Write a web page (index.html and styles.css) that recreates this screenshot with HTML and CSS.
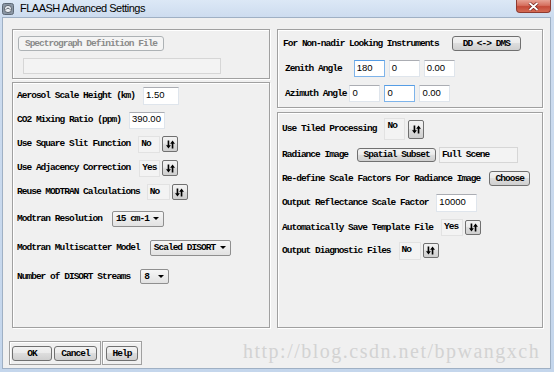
FILE: index.html
```html
<!DOCTYPE html>
<html>
<head>
<meta charset="utf-8">
<title>FLAASH Advanced Settings</title>
<link rel="stylesheet" href="styles.css">
</head>
<body>
<div class="window">
  <div class="titlebar">
    <svg class="app-icon" width="12" height="12" viewBox="0 0 12 12">
      <rect x="0.5" y="0.5" width="11" height="11" rx="2" fill="#8a96a4" stroke="#5d6875"/>
      <circle cx="6" cy="6" r="3.6" fill="#e9edf2" stroke="#4a525c" stroke-width="0.8"/>
      <path d="M3.6 6.8 Q6 3.5 8.4 6.8" fill="none" stroke="#4a525c" stroke-width="0.9"/>
    </svg>
    <span class="title">FLAASH Advanced Settings</span>
    <div class="close">
      <svg width="11" height="9" viewBox="0 0 11 9"><path d="M1.5 1 L9.5 8 M9.5 1 L1.5 8" stroke="#6b1c14" stroke-width="3.2"/><path d="M1.5 1 L9.5 8 M9.5 1 L1.5 8" stroke="#fff" stroke-width="1.8"/></svg>
    </div>
  </div>
  <div class="client">
    <div class="columns">
      <div class="col col-left">
        <div class="panel panel-spectro">
          <div class="btn btn-disabled spectro-btn">Spectrograph Definition File</div>
          <div class="field field-disabled spectro-field"></div>
        </div>
        <div class="panel panel-aero">
          <div class="row h24"><span class="lbl">Aerosol Scale Height (km)</span><div class="field w36 h18 ml8">1.50</div></div>
          <div class="row h24"><span class="lbl">CO2 Mixing Ratio (ppm)</span><div class="field w36 h17 ml8">390.00</div></div>
          <div class="row h24"><span class="lbl">Use Square Slit Function</span><div class="toggle w22 h17 ml8">No</div><div class="arrows w16 h16 ml2"><svg width="9" height="9" viewBox="0 0 11 10"><path d="M2 0h2v6h2l-3 4-3-4h2z M7 10h2V4h2L8 0 5 4h2z" fill="#000"/></svg></div></div>
          <div class="row h24"><span class="lbl">Use Adjacency Correction</span><div class="toggle w21 h17 ml9">Yes</div><div class="arrows w16 h16 ml2"><svg width="9" height="9" viewBox="0 0 11 10"><path d="M2 0h2v6h2l-3 4-3-4h2z M7 10h2V4h2L8 0 5 4h2z" fill="#000"/></svg></div></div>
          <div class="row h24"><span class="lbl">Reuse MODTRAN Calculations</span><div class="toggle w23 h16 ml7">No</div><div class="arrows w16 h16 ml2"><svg width="9" height="9" viewBox="0 0 11 10"><path d="M2 0h2v6h2l-3 4-3-4h2z M7 10h2V4h2L8 0 5 4h2z" fill="#000"/></svg></div></div>
          <div class="row h29"><span class="lbl">Modtran Resolution</span><div class="combo w52 h16 ml10"><span>15 cm-1</span><svg width="6" height="3" viewBox="0 0 6 3"><path d="M0 0h6L3 3z" fill="#000"/></svg></div></div>
          <div class="row h29"><span class="lbl">Modtran Multiscatter Model</span><div class="combo w81 h16 ml10"><span>Scaled DISORT</span><svg width="6" height="3" viewBox="0 0 6 3"><path d="M0 0h6L3 3z" fill="#000"/></svg></div></div>
          <div class="row h29"><span class="lbl">Number of DISORT Streams</span><div class="combo w29 h15 ml10"><span>8</span><svg width="6" height="3" viewBox="0 0 6 3"><path d="M0 0h6L3 3z" fill="#000"/></svg></div></div>
        </div>
      </div>
      <div class="col col-right">
        <div class="panel panel-angles">
          <div class="row h17"><span class="lbl">For Non-nadir Looking Instruments</span><div class="btn w69 h15 ml13">DD &lt;-&gt; DMS</div></div>
          <div class="row h17 indent2"><span class="lbl">Zenith Angle</span><div class="field w31 h17 ml12 focus">180</div><div class="field w31 h17 ml4">0</div><div class="field w31 h17 ml4">0.00</div></div>
          <div class="row h17 indent2"><span class="lbl">Azimuth Angle</span><div class="field w31 h17 ml3">0</div><div class="field w31 h17 ml4 focus">0</div><div class="field w31 h17 ml4">0.00</div></div>
        </div>
        <div class="panel panel-proc">
          <div class="row h26"><span class="lbl">Use Tiled Processing</span><div class="toggle w21 h22 ml8">No</div><div class="arrows w16 h19 ml3"><svg width="9" height="9" viewBox="0 0 11 10"><path d="M2 0h2v6h2l-3 4-3-4h2z M7 10h2V4h2L8 0 5 4h2z" fill="#000"/></svg></div></div>
          <div class="row h26"><span class="lbl">Radiance Image</span><div class="btn w79 h14 ml9">Spatial Subset</div><div class="field field-disabled w79 h16 ml3 topleft">Full Scene</div></div>
          <div class="row h21"><span class="lbl">Re-define Scale Factors For Radiance Image</span><div class="btn w41 h15 ml9">Choose</div></div>
          <div class="row h27"><span class="lbl">Output Reflectance Scale Factor</span><div class="field w41 h18 ml8">10000</div></div>
          <div class="row h23"><span class="lbl">Automatically Save Template File</span><div class="toggle w22 h17 ml8">Yes</div><div class="arrows w16 h15 ml2"><svg width="9" height="9" viewBox="0 0 11 10"><path d="M2 0h2v6h2l-3 4-3-4h2z M7 10h2V4h2L8 0 5 4h2z" fill="#000"/></svg></div></div>
          <div class="row h23"><span class="lbl">Output Diagnostic Files</span><div class="toggle w22 h18 ml8">No</div><div class="arrows w16 h15 ml2"><svg width="9" height="9" viewBox="0 0 11 10"><path d="M2 0h2v6h2l-3 4-3-4h2z M7 10h2V4h2L8 0 5 4h2z" fill="#000"/></svg></div></div>
        </div>
      </div>
    </div>
    <div class="bottom">
      <div class="group group-main">
        <div class="btn w40 h15">OK</div>
        <div class="btn w43 h15">Cancel</div>
      </div>
      <div class="group group-help">
        <div class="btn w32 h15">Help</div>
      </div>
    </div>
  </div>
  <div class="watermark">http://blog.csdn.net/bpwangxch</div>
</div>
</body>
</html>
```
FILE: styles.css
```css
* { box-sizing: border-box; margin: 0; padding: 0; }
body { margin: 0; background: #ffffff; }

.window {
  width: 554px;
  height: 372px;
  position: relative;
  overflow: hidden;
  display: flex;
  flex-direction: column;
  background: linear-gradient(#dce8f6 0, #cddcef 17px, #c4d6ec 100%);
}

.titlebar {
  height: 17px;
  display: flex;
  align-items: flex-start;
  padding-left: 2px;
  flex: none;
}
.app-icon { margin-top: 3px; flex: none; }
.title {
  font: 11px/17px "Liberation Sans", Arial, sans-serif;
  letter-spacing: -0.5px;
  color: #000;
  margin-left: 6px;
}
.close {
  margin-left: auto;
  margin-right: 3px;
  width: 35px;
  height: 13px;
  border: 1px solid #8e3a30;
  border-top: none;
  border-radius: 0 0 4px 4px;
  background: linear-gradient(#e7a294 0, #d6705f 45%, #c54a38 55%, #d46b55 100%);
  display: flex;
  align-items: center;
  justify-content: center;
}

.client {
  flex: 1;
  margin: 0 3px 3px 2px;
  border: 1px solid #9fb0c4;
  background: #f0f0f0;
  padding: 11px 7px 3px 9px;
  display: flex;
  flex-direction: column;
}

.columns { display: flex; gap: 7px; height: 299px; }
.col { display: flex; flex-direction: column; }
.col-left { width: 258px; gap: 3px; }
.col-right { width: 266px; gap: 4px; }

.panel {
  border: 1px solid #a0a0a0;
  box-shadow: inset 1px 1px 0 #ffffff, 1px 1px 0 #ffffff;
}
.panel-spectro { height: 50px; padding: 6px 0 0 5px; display: flex; flex-direction: column; align-items: flex-start; }
.panel-aero { flex: 1; padding: 1px 0 0 4px; display: flex; flex-direction: column; }
.panel-angles { height: 79px; padding: 5px 0 0 5px; display: flex; flex-direction: column; gap: 8px; }
.panel-proc { flex: 1; padding: 3px 0 0 4px; display: flex; flex-direction: column; }

.row { display: flex; align-items: center; flex: none; }
.indent2 { padding-left: 2px; }

.lbl, .btn, .toggle, .combo {
  font: bold 9.5px/1 "Liberation Mono", "Courier New", monospace;
  letter-spacing: -0.98px;
  color: #000;
  white-space: pre;
}

.btn {
  border: 1px solid #707070;
  border-radius: 3px;
  background: linear-gradient(#f2f2f2 0, #ebebeb 45%, #dddddd 50%, #cfcfcf 100%);
  display: flex;
  align-items: center;
  justify-content: center;
  flex: none;
}
.btn-disabled {
  border-color: #adb2b5;
  background: #f4f4f4;
  color: #8a8a8a;
}
.spectro-btn { width: 146px; height: 15px; }
.spectro-field { width: 198px; height: 16px; margin: 7px 0 0 5px; }

.field {
  background: #ffffff;
  border: 1px solid #dfe5ec;
  border-top-color: #abadb3;
  font: 9.5px/1 "Liberation Sans", Arial, sans-serif;
  color: #000;
  padding: 0 0 2px 2px;
  display: flex;
  align-items: center;
  flex: none;
}
.field.focus { border-color: #7eb4ea; border-top-color: #569de5; }
.field-disabled {
  background: #f3f3f3;
  border: 1px solid #d6d6d6;
  color: #000;
}
.field-disabled.topleft {
  font: bold 9.5px/1 "Liberation Mono", "Courier New", monospace;
  letter-spacing: -0.98px;
  align-items: flex-start;
  padding: 2px 0 0 2px;
}

.toggle {
  background: #f3f3f3;
  border: 1px solid #e2e2e2;
  padding: 2px 0 0 2px;
  flex: none;
}

.arrows {
  border: 1px solid #707070;
  border-radius: 2px;
  background: linear-gradient(#f2f2f2 0, #ebebeb 45%, #dddddd 50%, #cfcfcf 100%);
  display: flex;
  align-items: center;
  justify-content: center;
  flex: none;
}

.combo {
  border: 1px solid #8f8f8f;
  border-radius: 2px;
  background: linear-gradient(#f6f6f6 0, #ececec 50%, #e2e2e2 100%);
  display: flex;
  align-items: center;
  justify-content: space-between;
  padding: 0 4px 0 3px;
  flex: none;
}

.bottom { margin: 13px 0 0 -3px; height: 24px; display: flex; gap: 1px; flex: none; }
.group {
  border: 1px solid #a0a0a0;
  box-shadow: inset 1px 1px 0 #ffffff;
  display: flex;
  gap: 2px;
  padding: 4px 3px 0 2px;
}
.group-help { padding-left: 3px; }

.watermark {
  position: absolute;
  left: 243px;
  top: 341px;
  font: 20px/20px "Liberation Serif", "Times New Roman", serif;
  letter-spacing: 1.5px;
  color: #d3d3d3;
  white-space: nowrap;
}

/* sizes */
.w16 { width: 16px; } .w21 { width: 21px; } .w22 { width: 22px; } .w23 { width: 23px; }
.w29 { width: 29px; } .w31 { width: 31px; } .w32 { width: 32px; } .w36 { width: 36px; }
.w40 { width: 40px; } .w41 { width: 41px; } .w43 { width: 43px; } .w52 { width: 52px; }
.w69 { width: 69px; } .w79 { width: 79px; } .w81 { width: 81px; }
.h14 { height: 14px; } .h15 { height: 15px; } .h16 { height: 16px; } .h17 { height: 17px; }
.h18 { height: 18px; } .h19 { height: 19px; } .h21 { height: 21px; } .h22 { height: 22px; }
.h23 { height: 23px; } .h24 { height: 24px; } .h26 { height: 26px; } .h27 { height: 27px; }
.h29 { height: 29px; }
.ml2 { margin-left: 2px; } .ml3 { margin-left: 3px; } .ml4 { margin-left: 4px; }
.ml7 { margin-left: 7px; } .ml8 { margin-left: 8px; } .ml9 { margin-left: 9px; }
.ml10 { margin-left: 10px; } .ml12 { margin-left: 12px; } .ml13 { margin-left: 13px; }
```
